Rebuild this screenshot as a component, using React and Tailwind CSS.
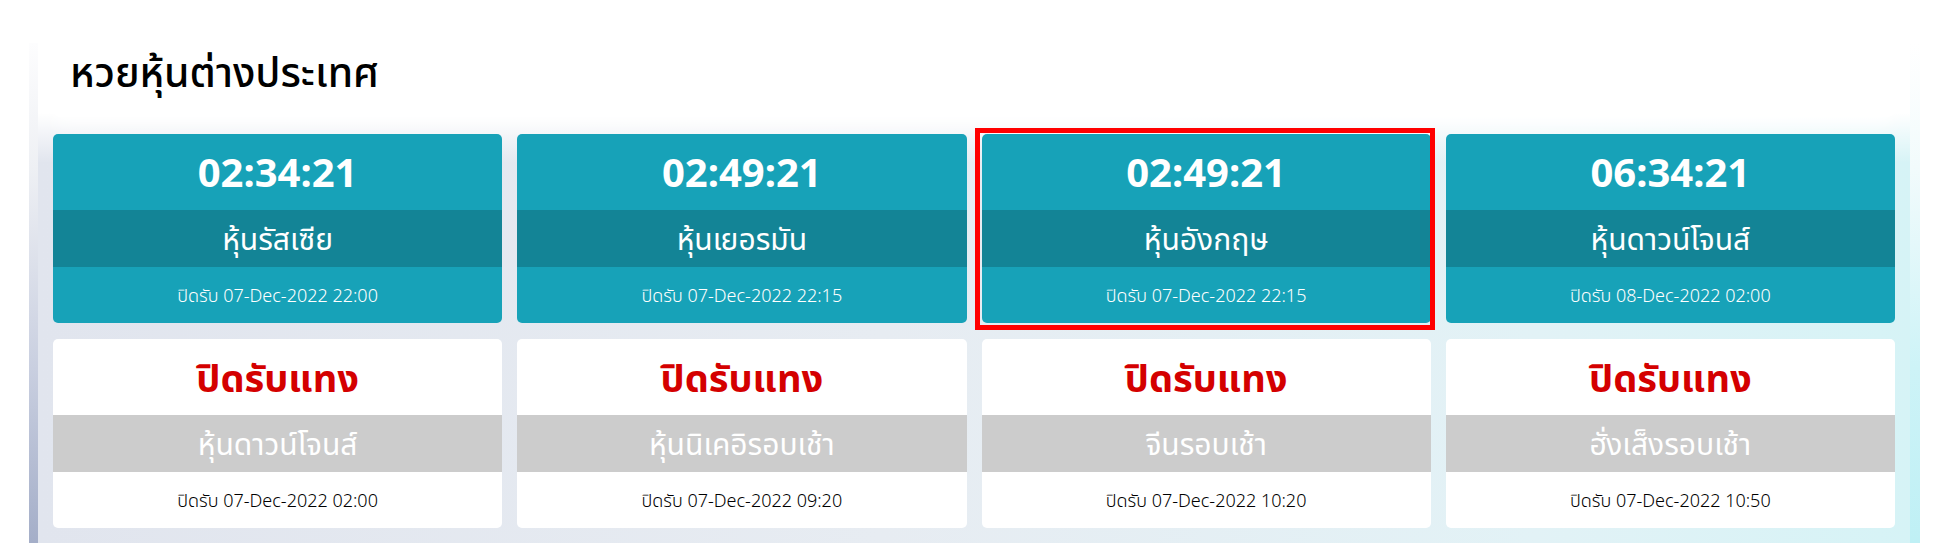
import React from "react";

const top = [
  { time: "02:34:21", name: "หุ้นรัสเซีย", close: "ปิดรับ 07-Dec-2022 22:00" },
  { time: "02:49:21", name: "หุ้นเยอรมัน", close: "ปิดรับ 07-Dec-2022 22:15" },
  { time: "02:49:21", name: "หุ้นอังกฤษ", close: "ปิดรับ 07-Dec-2022 22:15", hl: true },
  { time: "06:34:21", name: "หุ้นดาวน์โจนส์", close: "ปิดรับ 08-Dec-2022 02:00" },
];

const bottom = [
  { name: "หุ้นดาวน์โจนส์", close: "ปิดรับ 07-Dec-2022 02:00" },
  { name: "หุ้นนิเคอิรอบเช้า", close: "ปิดรับ 07-Dec-2022 09:20" },
  { name: "จีนรอบเช้า", close: "ปิดรับ 07-Dec-2022 10:20" },
  { name: "ฮั่งเส็งรอบเช้า", close: "ปิดรับ 07-Dec-2022 10:50" },
];

function OpenCard({ c }) {
  return (
    <div className="relative">
      <div className="rounded-[5px] overflow-hidden bg-[#17a2b8] text-white">
        <div className="h-[76px] flex items-center justify-center text-[40px] font-bold leading-none">
          {c.time}
        </div>
        <div className="h-[57px] bg-[#138496] flex items-center justify-center text-[30px] leading-none">
          {c.name}
        </div>
        <div className="h-[56px] flex items-center justify-center text-[18px] font-light leading-none">
          {c.close}
        </div>
      </div>
      {c.hl && (
        <div className="absolute -left-[7px] -top-[6px] -right-[4px] -bottom-[7px] border-[5px] border-[#ff0000] pointer-events-none" />
      )}
    </div>
  );
}

function ClosedCard({ c }) {
  return (
    <div className="rounded-[5px] overflow-hidden bg-white">
      <div className="h-[76px] flex items-center justify-center text-[38px] font-bold leading-none text-[#d40000]">
        ปิดรับแทง
      </div>
      <div className="h-[57px] bg-[#cccccc] flex items-center justify-center text-[30px] leading-none text-white">
        {c.name}
      </div>
      <div className="h-[56px] flex items-center justify-center text-[18px] font-light leading-none text-black">
        {c.close}
      </div>
    </div>
  );
}

export default function App() {
  return (
    <div className="w-[1935px] h-[543px] bg-white overflow-hidden font-['Noto_Sans','Noto_Sans_Thai',sans-serif]">
      <div className="mt-[43px] ml-[29px] w-[1891px] h-[500px] flex">
        <div className="w-[9px] bg-[linear-gradient(180deg,#fdfdfe_0%,#eef0f4_25%,#c9cfe0_65%,#a4aec8_100%)]" />
        <div className="flex-1 px-[15px] bg-[linear-gradient(180deg,#ffffff_0px,#ffffff_70px,rgba(255,255,255,0)_120px),linear-gradient(90deg,#e1e5ee_0%,#e7ecf2_45%,#e2f2f6_80%,#d6f3f6_100%)]">
          <div className="h-[74px] bg-white rounded-b-[8px] pl-[17px] pt-[4px] shadow-[0_6px_18px_rgba(255,255,255,0.9)]">
            <h1 className="text-[41px] leading-[1.2] font-medium text-black">หวยหุ้นต่างประเทศ</h1>
          </div>
          <div className="mt-[17px] grid grid-cols-4 gap-x-[15px] gap-y-[16px]">
            {top.map((c, i) => (
              <OpenCard key={i} c={c} />
            ))}
            {bottom.map((c, i) => (
              <ClosedCard key={i} c={c} />
            ))}
          </div>
        </div>
        <div className="w-[10px] bg-[linear-gradient(180deg,#ffffff_0%,#f2fbfc_25%,#cdf3f7_65%,#bff0f5_100%)]" />
      </div>
    </div>
  );
}
